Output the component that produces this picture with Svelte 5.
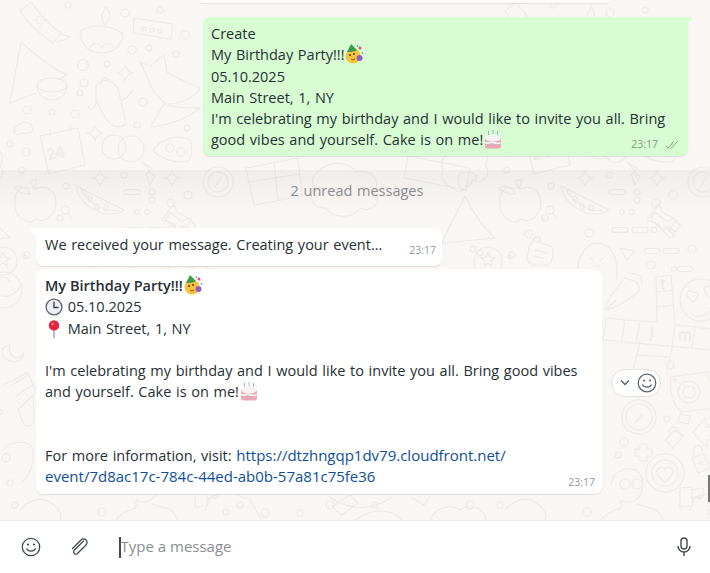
<script lang="ts">
	// small rings scattered between the doodles: [x, y, r]
	const rings = [
		[68, 5, 3], [125, 13, 4], [132, 50, 4], [149, 48, 3], [176, 54, 3], [185, 35, 4], [160, 10, 3],
		[83, 65, 5.500], [107, 64, 3], [84, 83, 4], [80, 93, 3], [143, 102, 4], [27, 110, 4], [52, 112, 3],
		[75, 114, 4], [137, 125, 3], [187, 128, 3], [26, 152, 4], [10, 144, 3], [22, 170, 3], [66, 186, 3],
		[124, 175, 3], [188, 195, 4], [171, 203, 4], [152, 192, 3], [137, 212, 2.500], [147, 212, 2.500],
		[169, 230, 3], [207, 249, 4], [166, 265, 4], [189, 269, 2.500], [84, 192, 2], [152, 200, 3],
		[60, 218, 3], [-12, 249, 3], [44, 234, 4], [-5, 253, 3], [52, 239, 3], [-12, 284, 3], [27, 255, 3],
		[25, 257, 2], [104, 233, 4], [66, 285, 3], [-1, 412, 3], [6, 458, 4], [10, 483, 3], [15, 505, 3],
		[185, 365, 4], [182, 419, 3], [139, 442, 4], [133, 455, 3], [102, 512, 4], [226, 512, 3],
		[215, 497, 2], [240, 505, 3], [265, 513, 4], [300, 513, 3], [330, 505, 4], [375, 505, 3], [470, 505, 4]
	];
	const pills = [
		[124, 192, 16], [127, 230, 16], [147, 230, 16], [159, 251, 16], [178, 251, 16], [192, 269, 16]
	];
</script>

<div class="screen">
	<main class="chat">
		<svg class="wallpaper" width="710" height="520" viewBox="0 0 710 520" fill="none" stroke="#eeeae6" stroke-width="1.100" stroke-linejoin="round" stroke-linecap="round">
			<defs>
				<g id="tile">
					{#each rings as [x, y, r]}
						<circle cx={x} cy={y} {r} />
					{/each}
					{#each pills as [x, y, w]}
						<rect {x} y={y - 2.500} width={w} height="5" rx="2.500" />
					{/each}

					<!-- sunscreen tube -->
					<path d="M20 11L31 2C38 12 48 24 61 33L53 43C40 34 28 24 20 11zM60 34l11 3-5 2-9 3" />
					<circle cx="40" cy="20" r="4" /><path d="M40 12v2M48 20h-2M32 20h2M40 28v-2" />
					<!-- lamp -->
					<path d="M80 31C80 47 92 53 102 53C114 53 123 44 123 34C110 24 92 24 80 31z" />
					<path d="M105 25C99 17 103 12 106 7C110 12 112 17 105 25zM90 48c3-6 9-6 12 0 3-6 9-6 12 0" />
					<!-- matchbox -->
					<path d="M134 18L173 24L171 39L133 33z" /><circle cx="144" cy="29" r="2" /><circle cx="152" cy="30" r="2" /><circle cx="160" cy="31" r="2" />
					<!-- tent and bowl -->
					<path d="M21 42L10 103L36 93M21 42C36 56 52 68 67 75L57 80" />
					<ellipse cx="52" cy="85" rx="15" ry="7" /><path d="M37 86C38 95 44 100 52 100C60 100 66 95 67 86" />
					<!-- cactus -->
					<path d="M96 85C106 75 118 82 120 97L126 124C118 130 112 126 106 119L96 100z" />
					<path d="M96 100C96 110 90 112 88 106M122 100C128 100 130 92 133 90M100 85l5-8 4 3" />
					<!-- fox -->
					<path d="M140 62L150 66L164 55L167 72C180 80 192 84 200 88C192 100 180 104 166 104C156 96 150 88 148 78z" />
					<path d="M152 124L164 104C174 108 190 108 200 108C186 120 170 124 152 127z" />
					<!-- calendar -->
					<path d="M40 136L78 128L85 165L49 174z" /><path d="M50 130v6M70 126v6" />
					<text class="doodle-text" x="48" y="160" transform="rotate(-12 48 160)">24</text>
					<!-- dumplings and blob -->
					<circle cx="114" cy="147" r="12" /><circle cx="131" cy="149" r="13" />
					<path d="M153 151C160 138 180 134 190 140C193 150 192 162 184 162C170 162 160 158 153 151z" />
					<circle cx="170" cy="148" r="4" /><circle cx="181" cy="152" r="4" />
					<path d="M15 128C18 122 30 120 32 127C36 132 28 134 22 133C18 136 12 134 15 128z" />
					<!-- four point stars -->
					<path d="M125 65C126 70 128 72 133 73C128 74 126 76 125 81C124 76 122 74 117 73C122 72 124 70 125 65z" />
					<path d="M95 125C96 130 98 132 103 133C98 134 96 136 95 141C94 136 92 134 87 133C92 132 94 130 95 125z" />
					<path d="M100 170C101 175 103 177 108 178C103 179 101 181 100 186C99 181 97 179 92 178C97 177 99 175 100 170z" />
					<path d="M172 170C173 175 175 177 180 178C175 179 173 181 172 186C171 181 169 179 164 178C169 177 171 175 172 170z" />
					<!-- lightning -->
					<path d="M142 162L152 168L149 172L155 176L150 185L146 174L150 171z" />
					<!-- apple -->
					<path d="M30 189C16 183 14 198 15 207C17 220 30 225 36 219C44 224 55 216 56 204C56 190 46 184 36 189L34 188" />
					<path d="M30 181L37 179L34 189zM14 188C20 184 28 188 30 194C22 194 18 192 14 188z" />
					<circle cx="65" cy="210" r="4" /><path d="M68 213l4 6" />
					<!-- watermelon -->
					<path d="M76 186C78 205 105 222 124 210z" /><path d="M80 187C84 198 104 214 118 210" />
					<ellipse cx="90" cy="199" rx="2" ry="3" /><ellipse cx="97" cy="207" rx="2" ry="3" /><ellipse cx="106" cy="208" rx="2" ry="3" />
					<!-- bone -->
					<path d="M170 212L182 222L188 218L196 226L190 232L184 226L178 230L166 220z" />
					<!-- pushpin -->
					<path d="M158 222L170 206L173 214L188 222L180 232L176 228L186 238L181 240L171 230L170 226z" transform="translate(4 -2)" />
					<!-- paper arrow -->
					<path d="M135 248L150 251L142 260z" />
					<!-- chat note and ghost -->
					<path d="M47 243C46 236 58 236 56 243L67 247C69 252 67 262 64 265L47 265L42 260L44 246z" /><path d="M50 250l12 3M48 256l10 2" />
					<path d="M92 272C94 250 105 240 118 244C132 250 132 265 132 280" /><path d="M106 258l3 3M118 258l-3 3M110 266h5" />
					<!-- star donut -->
					<circle cx="3" cy="261" r="14" /><path d="M3 252l2 5 5 1-4 3 1 5-4-3-4 3 1-5-4-3 5-1z" />
					<!-- volcano -->
					<path d="M-43 243C-36 226 -26 210 -20 196C-14 208 -4 226 10 238z" />
					<path d="M-24 190C-30 176 -26 172 -20 172C-14 172 -10 172 -8 178C-20 184 -22 190 -24 190z" />
					<path d="M-25 192C-40 186 -46 178 -42 170C-46 160 -40 152 -30 155C-26 148 -14 146 -8 150C0 148 6 156 0 166C8 172 -2 186 -12 180C-14 186 -20 190 -25 192z" />
					<!-- pen nib -->
					<path d="M120 310C122 300 130 290 140 278L152 282L155 290C146 298 136 306 120 310z" /><path d="M142 272L156 276L157 284M121 310l10-10" />
					<!-- crossword -->
					<path d="M171 277L186 275L190 325L212 327L230 330L226 350L118 340L121 318L140 320L172 322zM172 292l17-2M172 307l17-2M140 320l-3 20M155 322l-4 20M190 326l-3 20M210 328l-3 20M155 342l-7 28M187 347l-5 26M151 355l34 2" />
					<text class="doodle-text" x="175" y="289">t</text>
					<text class="doodle-text" x="165" y="336">j</text>
					<text class="doodle-text" x="193" y="340">m</text>
					<!-- heart eyes smiley -->
					<circle cx="216" cy="300" r="21" />
					<path d="M203 297C199 290 208 289 209 293C212 290 217 296 208 302zM220 292C216 286 226 284 227 289C232 288 232 296 224 298z" />
					<path d="M205 312C212 320 222 316 228 308" />
					<!-- camera -->
					<path d="M186 377L222 372L232 408L196 412C188 404 184 390 186 377z" />
					<circle cx="204" cy="392" r="11" /><circle cx="204" cy="392" r="6" /><circle cx="190" cy="380" r="1.500" />
					<!-- compass -->
					<circle cx="154" cy="417" r="17" /><circle cx="154" cy="417" r="13" /><path d="M150 423l6-9 2 2z" /><path d="M154 400v-3" />
					<path d="M195 414L205 416L203 424L193 422z" />
					<!-- locks and arrow -->
					<path d="M180 440L190 430L198 436L188 448z" /><path d="M184 434C184 424 192 426 194 432" />
					<path d="M208 432L220 418L222 427L232 427L232 440L222 440L222 448z" />
					<path d="M207 458L219 454L225 468L213 473z" /><path d="M209 456C206 444 216 442 218 452" /><circle cx="216" cy="463" r="1.500" />
					<!-- plus -->
					<path d="M155 444h7v5h5v7h-5v5h-7v-5h-5v-7h5z" />
					<!-- heart target -->
					<circle cx="180" cy="473" r="19" /><circle cx="180" cy="473" r="13" />
					<path d="M180 482C172 476 171 472 173 469C175 466 179 467 180 470C181 467 185 466 187 469C189 472 188 476 180 482z" />
					<!-- squares -->
					<path d="M195 488L207 487L207 506L195 507zM207 490L218 488L218 497L207 498" />
					<!-- man with glasses -->
					<path d="M126 485C128 472 140 466 150 470C158 474 160 484 156 494C152 502 142 504 136 500L136 508C124 512 118 516 116 520M152 504L172 510L178 520" />
					<circle cx="140" cy="484" r="5" /><circle cx="152" cy="484" r="5" />
					<!-- left edge: moon, loaf, smiley -->
					<path d="M10 345C8 358 18 362 24 352C22 366 4 364 2 352C2 348 6 345 10 345z" />
					<path d="M4 385L28 372L36 392L18 410L22 420C26 430 36 426 34 416L33 396M12 385l16-10M16 396l18-12" />
					<path d="M10 282C6 274 -2 276 -4 282M2 296C10 298 18 292 20 286" />
					<circle cx="4" cy="290" r="18" />
					<path d="M3 450C10 440 30 440 32 448C36 460 30 476 22 482" />
					<path d="M20 510C30 498 44 496 54 505C60 510 62 516 60 520" />
					<!-- band row: compass, gift, flower, phone -->
					<circle cx="218" cy="182" r="15" /><circle cx="218" cy="182" r="10" /><path d="M214 188l8-11" />
					<path d="M246 168L298 158L302 196L254 205zM274 162l4 38M248 182l52-8" />
					<path d="M320 170C330 160 350 162 356 172C370 168 382 180 374 192C384 200 372 214 360 208C352 220 332 218 326 208C314 210 306 196 316 188C308 180 316 172 320 170z" />
					<path d="M408 156L470 168L466 190L404 178z" />
					<!-- bottom edge -->
					<path d="M205 510L210 497L230 492L250 500L262 520" />
					<path d="M330 497C350 512 374 510 392 497" />
					<path d="M332 507L350 495L358 503L342 515z" />
					<path d="M355 520C372 508 392 508 402 520" />
					<path d="M430 520C436 506 452 504 460 510C470 502 484 508 486 520" />
					<path d="M412 498L424 505L430 496" />
				</g>
			</defs>
			<use href="#tile" />
			<use href="#tile" x="485" />
		</svg>

		<div class="prev-edge"></div>

		<div class="row out">
			<div class="bubble green">
				<svg class="tail-right" width="5" height="7" viewBox="0 0 5 7"><path d="M0 0h5L0 7z" fill="#d9fdd3" /></svg>
				<div class="text">Create<br />My Birthday Party!!!<svg class="emoji" viewBox="0 0 20 20"><circle cx="9" cy="12" r="7.500" fill="#f7c23c" /><path d="M3 8L7 0L13 6C10 8 6 8 3 8z" fill="#3f9a4a" /><circle cx="15.500" cy="14" r="3" fill="#8c5fc5" /><circle cx="16" cy="4" r="1.500" fill="#e0506a" /><path d="M18 8l1 2M13 1l1 2" stroke="#4a90d9" /><circle cx="6" cy="11" r="1" fill="#5a3a1c" /><circle cx="10" cy="10" r="1" fill="#5a3a1c" /><path d="M7 15c1 1 2 1 4 0" stroke="#8a4a1c" fill="none" /></svg><br />05.10.2025<br />Main Street, 1, NY<br />I'm celebrating my birthday and I would like to invite you all. Bring good vibes and yourself. Cake is on me!<svg class="emoji" viewBox="0 0 20 20"><path d="M2 9h16v8a2.500 2.500 0 0 1-2.500 2.500h-11A2.500 2.500 0 0 1 2 17z" fill="#e7a9b4" /><ellipse cx="10" cy="9" rx="8" ry="3.500" fill="#f8f3f1" /><path d="M5.500 2v4M10 1v4M14.500 2v4" stroke="#9ab8c9" /><path d="M2 13.500c3 2 5-1 8 0s5 2 8 0" stroke="#fff" stroke-width="1.500" fill="none" /></svg></div>
				<span class="meta">23:17
					<svg width="14" height="10" viewBox="0 0 14 10" fill="none" stroke="#7f9c80" stroke-width="1"><path d="M1 6l2 2.500L8.500 1.500M6 8.500L12.500 1.500" /></svg>
				</span>
			</div>
		</div>

		<div class="unread"><span>2 unread messages</span></div>

		<div class="row in">
			<div class="bubble white first">
				<svg class="tail-left" width="7" height="9" viewBox="0 0 7 9"><path d="M7 0H0l7 9z" fill="#fff" /></svg>
				<div class="text single">We received your message. Creating your event...</div>
				<span class="meta single-meta">23:17</span>
			</div>
		</div>

		<div class="row in second">
			<div class="bubble white wide">
				<div class="text"><strong>My Birthday Party!!!</strong><svg class="emoji" viewBox="0 0 20 20"><circle cx="9" cy="12" r="7.500" fill="#f7c23c" /><path d="M3 8L7 0L13 6C10 8 6 8 3 8z" fill="#3f9a4a" /><circle cx="15.500" cy="14" r="3" fill="#8c5fc5" /><circle cx="16" cy="4" r="1.500" fill="#e0506a" /><path d="M18 8l1 2M13 1l1 2" stroke="#4a90d9" /><circle cx="6" cy="11" r="1" fill="#5a3a1c" /><circle cx="10" cy="10" r="1" fill="#5a3a1c" /><path d="M7 15c1 1 2 1 4 0" stroke="#8a4a1c" fill="none" /></svg><br /><svg class="emoji lead" viewBox="0 0 20 20"><circle cx="10" cy="10" r="8.800" fill="#eef0f6" stroke="#5f6470" stroke-width="1.500" /><path d="M10 4V10.500H15" fill="none" stroke="#3d4048" stroke-width="1.500" /></svg> 05.10.2025<br /><svg class="emoji lead" viewBox="0 0 20 20"><path d="M10 9v11" stroke="#9aa0a6" stroke-width="1.500" /><circle cx="10" cy="6" r="5.800" fill="#e3243b" /><circle cx="8.500" cy="4.500" r="1.300" fill="#f79aa5" /></svg> Main Street, 1, NY<br /><br />I'm celebrating my birthday and I would like to invite you all. Bring good vibes and yourself. Cake is on me!<svg class="emoji" viewBox="0 0 20 20"><path d="M2 9h16v8a2.500 2.500 0 0 1-2.500 2.500h-11A2.500 2.500 0 0 1 2 17z" fill="#e7a9b4" /><ellipse cx="10" cy="9" rx="8" ry="3.500" fill="#f8f3f1" /><path d="M5.500 2v4M10 1v4M14.500 2v4" stroke="#9ab8c9" /><path d="M2 13.500c3 2 5-1 8 0s5 2 8 0" stroke="#fff" stroke-width="1.500" fill="none" /></svg><br /><br /><br />For more information, visit: <a href="#link">https://dtzhngqp1dv79.cloudfront.net/<br />event/7d8ac17c-784c-44ed-ab0b-57a81c75fe36</a></div>
				<span class="meta">23:17</span>
			</div>
			<div class="react">
				<svg width="12" height="8" viewBox="0 0 12 8" fill="none" stroke="#54656f" stroke-width="1.500"><path d="M2 1.500l4 4 4-4" /></svg>
				<svg width="20" height="20" viewBox="0 0 20 20" fill="none" stroke="#54656f" stroke-width="1.200"><circle cx="10" cy="10" r="8.800" /><path d="M5.500 11.500c1.500 3.500 7.500 3.500 9 0" /><circle cx="7" cy="7.500" r="1" fill="#54656f" stroke="none" /><circle cx="13" cy="7.500" r="1" fill="#54656f" stroke="none" /></svg>
			</div>
		</div>

		<div class="scrollbar"></div>
	</main>

	<footer class="composer">
		<svg class="ico smile" width="20" height="20" viewBox="0 0 20 20" fill="none" stroke="#3f4a50" stroke-width="1.300"><circle cx="10" cy="10" r="8.700" /><path d="M5.500 11.500c1.500 3.500 7.500 3.500 9 0" /><circle cx="7" cy="7.500" r="1.100" fill="#3f4a50" stroke="none" /><circle cx="13" cy="7.500" r="1.100" fill="#3f4a50" stroke="none" /></svg>
		<svg class="ico clip" width="18" height="18" viewBox="0 0 18 18" fill="none" stroke="#3f4a50" stroke-width="1.300" stroke-linecap="round"><path d="M13.500 2.500L4 12a2.300 2.300 0 0 0 3.200 3.200L16 6.500a3.500 3.500 0 0 0-5-5L2.500 10" transform="translate(0 0.500)" /></svg>
		<span class="caret"></span>
		<span class="placeholder">Type a message</span>
		<svg class="ico mic" width="14" height="20" viewBox="0 0 14 20" fill="none" stroke="#3f4a50" stroke-width="1.400"><rect x="4" y="1" width="6" height="11" rx="3" /><path d="M1 9a6 6 0 0 0 12 0M7 15v4" /></svg>
	</footer>
</div>

<style>
	:global(body) {
		margin: 0;
		overflow: hidden;
	}

	.screen {
		width: 710px;
		height: 573px;
		display: flex;
		flex-direction: column;
		font-family: "Open Sans", "Noto Sans", sans-serif;
		font-size: 14.5px;
		line-height: 21.25px;
		word-spacing: 0.9px;
		color: #263036;
		overflow: hidden;
	}

	.chat {
		position: relative;
		height: 520px;
		background: #f9f6f3;
		border-bottom: 1px solid #e9e9e9;
		box-sizing: content-box;
		overflow: hidden;
	}

	.wallpaper {
		position: absolute;
		left: 0;
		top: 0;
	}

	.doodle-text {
		font-size: 15px;
		fill: none;
		stroke: #eeeae6;
		stroke-width: 0.8;
		word-spacing: 0;
	}

	.prev-edge {
		position: relative;
		width: 410px;
		height: 3px;
		margin-left: 200px;
		background: #fff;
		border-radius: 0 0 6px 6px;
		box-shadow: 0 1px 1px rgba(11, 20, 26, 0.08);
	}

	.row {
		position: relative;
		display: flex;
	}

	.out {
		justify-content: flex-end;
		padding: 14px 22px 0 0;
	}

	.in {
		padding-left: 36px;
	}

	.second {
		margin-top: 3px;
		align-items: center;
		gap: 9px;
	}

	.bubble {
		position: relative;
		box-sizing: border-box;
		padding: 6px 8px 6px 9px;
		border-radius: 7px;
		box-shadow: 0 1px 1px rgba(11, 20, 26, 0.1);
	}

	.green {
		width: 485px;
		height: 139px;
		padding-left: 8px;
		background: #d9fdd3;
		border-top-right-radius: 0;
	}

	.white {
		background: #fff;
	}

	.first {
		display: flex;
		width: 406px;
		height: 38px;
		border-top-left-radius: 0;
		padding-top: 6px;
	}

	.wide {
		width: 566px;
		height: 225px;
	}

	.tail-right {
		position: absolute;
		right: -5px;
		top: 0;
	}

	.tail-left {
		position: absolute;
		left: -7px;
		top: 0;
	}

	.emoji {
		display: inline-block;
		width: 20px;
		height: 20px;
		vertical-align: -4px;
	}

	.lead {
		width: 18px;
		height: 18px;
		vertical-align: -4px;
	}

	strong {
		font-weight: 600;
		word-spacing: 0;
	}

	a {
		color: #0f4f9c;
		font-size: 15px;
		word-spacing: 0;
		text-decoration: none;
	}

	.meta {
		position: absolute;
		right: 7px;
		bottom: 4px;
		display: flex;
		align-items: center;
		gap: 7px;
		font-size: 10.500px;
		line-height: 15px;
		color: #8f9a9f;
	}

	.green .meta {
		right: 9px;
		color: #7f9c80;
	}

	.single-meta {
		right: 6px;
		bottom: 8px;
	}

	.unread {
		position: relative;
		margin-top: 14px;
		height: 42px;
		display: flex;
		align-items: center;
		justify-content: center;
		padding-left: 4px;
		background: linear-gradient(rgba(11, 20, 26, 0.04), rgba(11, 20, 26, 0));
		color: #8a8d8f;
	}

	.unread + .in {
		margin-top: 16px;
	}

	.react {
		display: flex;
		align-items: center;
		gap: 6px;
		width: 50px;
		height: 28px;
		margin-top: 3px;
		padding-left: 7px;
		box-sizing: border-box;
		background: #fff;
		border: 1px solid #e6e2dc;
		border-radius: 14px;
	}

	.scrollbar {
		position: absolute;
		right: 0;
		top: 475px;
		width: 2px;
		height: 27px;
		background: #777;
	}

	.composer {
		height: 52px;
		flex: none;
		display: flex;
		align-items: center;
		background: #fff;
		padding: 0 19px 0 21px;
		box-sizing: border-box;
	}

	.clip {
		margin-left: 29px;
	}

	.caret {
		width: 1.500px;
		height: 21px;
		margin-left: 31px;
		background: #4a4a4a;
	}

	.placeholder {
		flex: 1;
		color: #8a8f92;
		font-size: 15px;
		word-spacing: 0;
	}
</style>
